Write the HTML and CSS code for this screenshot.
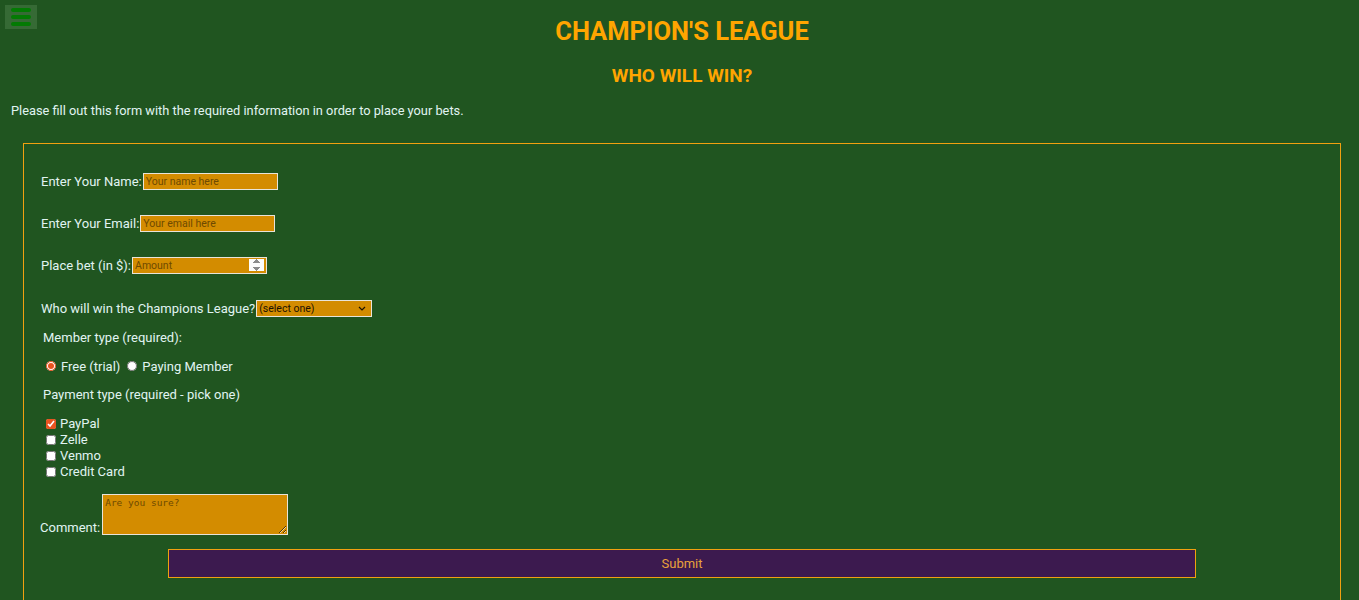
FILE: index.html
```html
<!DOCTYPE html>
<html lang="en">
<head>
<meta charset="utf-8">
<title>Champion's League</title>
<link rel="stylesheet" href="styles.css">
</head>
<body>
<button class="menu" type="button" aria-label="Menu">
  <span class="bar"></span><span class="bar"></span><span class="bar"></span>
</button>
<header class="header">
  <h1 class="title">CHAMPION'S LEAGUE</h1>
  <h2 class="subtitle">WHO WILL WIN?</h2>
</header>
<p class="intro">Please fill out this form with the required information in order to place your bets.</p>
<form class="bet-form">
  <div class="row"><label>Enter Your Name: <input class="field" type="text" placeholder="Your name here"></label></div>
  <div class="row"><label>Enter Your Email: <input class="field" type="email" placeholder="Your email here"></label></div>
  <div class="row"><label>Place bet (in $): <input class="field number" type="number" placeholder="Amount"></label></div>
  <div class="row"><label>Who will win the Champions League? <select class="field select"><option>(select one)</option><option>Real Madrid</option><option>Bayern</option></select></label></div>
  <div class="group-label">Member type (required):</div>
  <div class="radios">
    <label class="opt"><input type="radio" name="member" checked> Free (trial)</label>
    <label class="opt"><input type="radio" name="member"> Paying Member</label>
  </div>
  <div class="group-label">Payment type (required - pick one)</div>
  <div class="checks">
    <label class="chk"><input type="checkbox" checked> PayPal</label>
    <label class="chk"><input type="checkbox"> Zelle</label>
    <label class="chk"><input type="checkbox"> Venmo</label>
    <label class="chk"><input type="checkbox"> Credit Card</label>
  </div>
  <div class="comment-row"><label>Comment: <textarea class="comment" placeholder="Are you sure?"></textarea></label></div>
  <button class="submit" type="submit">Submit</button>
</form>
</body>
</html>
```
FILE: styles.css
```css
html, body {
  margin: 0;
  padding: 0;
  background: #205520;
}
body {
  font-family: Roboto, "Liberation Sans", sans-serif;
  font-size: 13px;
  color: #e0f4f2;
  height: 600px;
  overflow: hidden;
}
.menu {
  position: absolute;
  left: 5px;
  top: 5px;
  width: 32px;
  height: 24px;
  padding: 0;
  border: 0;
  background: #366a35;
  display: flex;
  flex-direction: column;
  align-items: center;
  justify-content: center;
  gap: 3px;
}
.bar {
  display: block;
  width: 20px;
  height: 4px;
  border-radius: 2px;
  background: #037a03;
}
.header {
  text-align: center;
  color: #ffa500;
  padding: 16px 0 0 5px;
}
.title {
  margin: 0;
  font-size: 25.5px;
  line-height: 30px;
  font-weight: 700;
}
.subtitle {
  margin: 19px 0 0;
  font-size: 19px;
  line-height: 22px;
  font-weight: 700;
}
.intro {
  margin: 16px 0 0 11px;
  line-height: 15px;
  font-size: 12.8px;
}
.bet-form {
  margin: 25px 18px 0 23px;
  border: 1px solid #f0a010;
  padding: 29px 0 40px 17px;
  display: flex;
  flex-direction: column;
  align-items: flex-start;
}
.row {
  height: 17px;
  line-height: 17px;
  margin-bottom: 25.5px;
  display: flex;
  align-items: center;
}
.row:first-child {
  margin-bottom: 24.5px;
}
.row label {
  display: flex;
  align-items: center;
  gap: 1px;
  white-space: nowrap;
}
.field {
  box-sizing: border-box;
  width: 135px;
  height: 17px;
  margin: 0;
  padding: 0 2px;
  border: 1px solid #e8e4d8;
  background: #d38c00;
  color: #3a2400;
  font-family: Roboto, "Liberation Sans", sans-serif;
  font-size: 10.5px;
}
.field::placeholder {
  color: #6e4a00;
}
.number::-webkit-inner-spin-button {
  opacity: 1;
  height: 13px;
  margin: 0;
}
.select {
  appearance: none;
  -webkit-appearance: none;
  width: 116px;
  padding: 0 12px 0 2px;
  color: #1d1200;
  font-size: 10.5px;
  background: #d38c00 url("data:image/svg+xml;utf8,<svg xmlns='http://www.w3.org/2000/svg' width='8' height='5' viewBox='0 0 8 5'><path d='M1 1l3 3 3-3' fill='none' stroke='%231d1200' stroke-width='1.2'/></svg>") no-repeat right 5px center;
}
.group-label {
  margin: -12.5px 0 0 2px;
  line-height: 15px;
}
.radios {
  margin: 14px 0 0 5px;
  display: flex;
  gap: 7px;
  line-height: 15px;
}
.opt, .chk {
  display: flex;
  align-items: center;
  gap: 5px;
}
.radios input {
  margin: 0;
  width: 10px;
  height: 10px;
  accent-color: #e95420;
}
.radios + .group-label {
  margin-top: 13px;
}
.checks {
  margin: 14px 0 0 5px;
  display: flex;
  flex-direction: column;
  line-height: 16px;
}
.checks input {
  margin: 0;
  width: 10px;
  height: 10px;
  accent-color: #e95420;
}
.chk {
  gap: 4px;
}
.comment-row {
  margin-top: 14px;
  margin-left: -1px;
}
.comment-row label {
  display: flex;
  align-items: flex-end;
  gap: 2px;
  line-height: 15px;
}
.comment {
  box-sizing: border-box;
  width: 186px;
  height: 41px;
  margin: 0;
  padding: 2px 2px;
  border: 1px solid #e8e4d8;
  background: #d38c00;
  font-family: "DejaVu Sans Mono", "Liberation Mono", monospace;
  font-size: 9.5px;
  resize: both;
}
.comment::placeholder {
  color: #6e4a00;
}
.submit {
  align-self: center;
  margin: 14px 0 0 -17px;
  width: 1028px;
  height: 29px;
  background: #3c1a4f;
  border: 1px solid #f0a010;
  color: #e9a13b;
  font-family: Roboto, "Liberation Sans", sans-serif;
  font-size: 13px;
}
```
